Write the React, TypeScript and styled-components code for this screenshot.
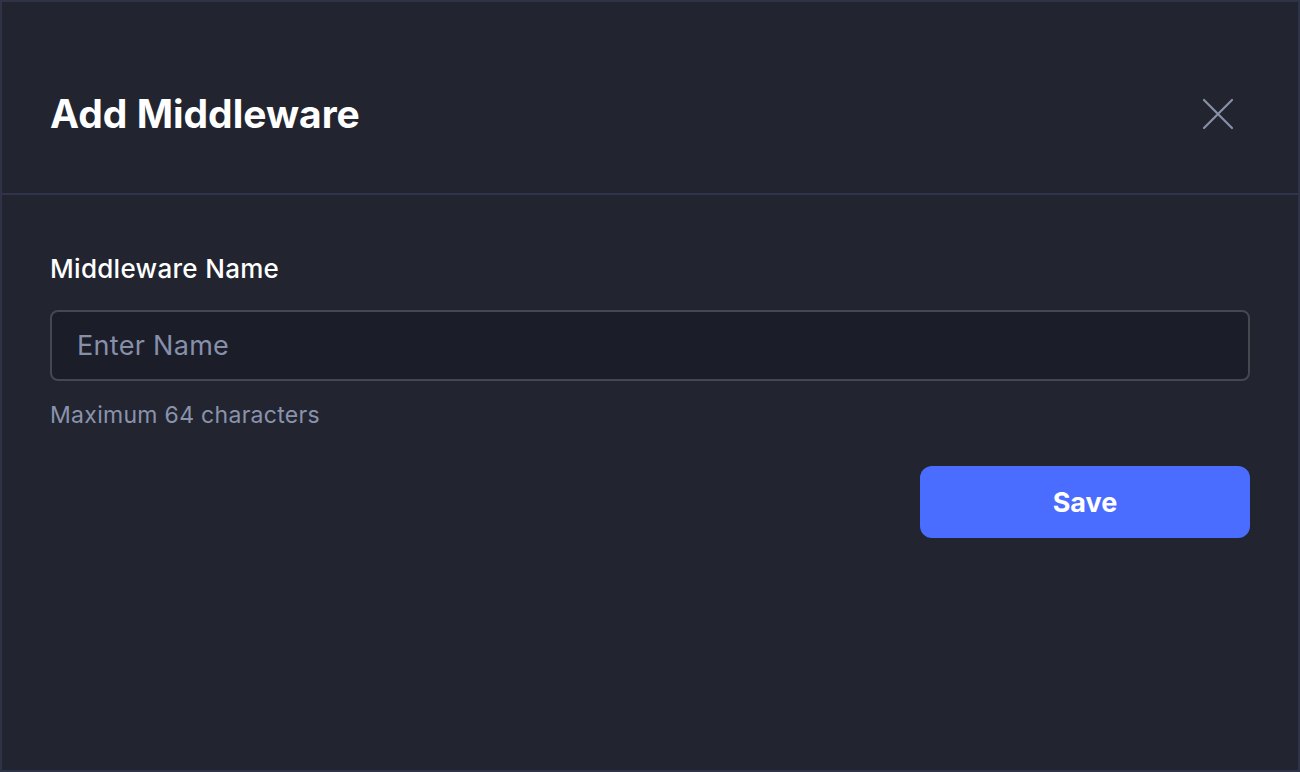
import React from "react";
import styled, { createGlobalStyle } from "styled-components";

const Global = createGlobalStyle`
  html, body { margin: 0; padding: 0; background: #22252f; }
  * { box-sizing: border-box; }
`;

const Frame = styled.div`
  width: 1300px;
  height: 772px;
  background: #22252f;
  border: 2px solid #2f3348;
  font-family: Inter, "Noto Sans", sans-serif;
  display: flex;
  flex-direction: column;
`;

const Header = styled.div`
  height: 193px;
  display: flex;
  align-items: center;
  justify-content: space-between;
  padding: 32px 64px 0 48px;
  border-bottom: 2px solid #30344a;
`;

const Title = styled.h1`
  margin: 0;
  color: #ffffff;
  font-size: 39px;
  font-weight: 700;
  letter-spacing: 0px;
`;

const CloseButton = styled.button`
  background: none;
  border: none;
  padding: 0;
  width: 32px;
  height: 32px;
  display: flex;
  align-items: center;
  justify-content: center;
  cursor: pointer;
`;

const Body = styled.div`
  padding: 58px 48px 0 48px;
  display: flex;
  flex-direction: column;
`;

const Label = styled.label`
  color: #ffffff;
  font-size: 26px;
  font-weight: 500;
  line-height: 32px;
  letter-spacing: 0.3px;
`;

const Input = styled.input`
  margin-top: 25px;
  height: 71px;
  width: 100%;
  background: #1b1d29;
  border: 2px solid #46484f;
  border-radius: 8px;
  padding: 0 25px;
  color: #ffffff;
  font-family: Inter, "Noto Sans", sans-serif;
  font-size: 27px;
  letter-spacing: 0.3px;
  outline: none;
  &::placeholder { color: #8690aa; }
`;

const Helper = styled.div`
  margin-top: 20px;
  color: #8a93ad;
  font-size: 23px;
  line-height: 28px;
  letter-spacing: 0.3px;
`;

const Actions = styled.div`
  display: flex;
  justify-content: flex-end;
  margin-top: 37px;
`;

const SaveButton = styled.button`
  width: 330px;
  height: 72px;
  background: #4a6cff;
  border: none;
  border-radius: 12px;
  color: #ffffff;
  font-family: Inter, "Noto Sans", sans-serif;
  font-size: 27px;
  font-weight: 700;
  cursor: pointer;
`;

export default function App() {
  return (
    <>
      <Global />
      <Frame>
        <Header>
          <Title>Add Middleware</Title>
          <CloseButton aria-label="Close">
            <svg width="32" height="32" viewBox="0 0 32 32">
              <path d="M2 2 L30 30 M30 2 L2 30" stroke="#8890a8" strokeWidth="2.2" strokeLinecap="round" />
            </svg>
          </CloseButton>
        </Header>
        <Body>
          <Label>Middleware Name</Label>
          <Input placeholder="Enter Name" />
          <Helper>Maximum 64 characters</Helper>
          <Actions>
            <SaveButton>Save</SaveButton>
          </Actions>
        </Body>
      </Frame>
    </>
  );
}
